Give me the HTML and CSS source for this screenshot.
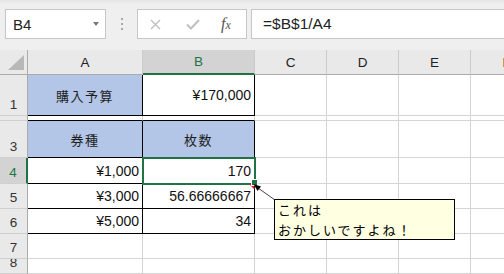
FILE: index.html
```html
<!DOCTYPE html>
<html lang="ja">
<head>
<meta charset="utf-8">
<title>Excel</title>
<link rel="stylesheet" href="styles.css">
</head>
<body>
<div class="app">
  <div class="toolbar">
    <div class="namebox"><span class="nb-text">B4</span><span class="nb-arrow"></span></div>
    <div class="grip"><i></i><i></i><i></i></div>
    <div class="fbtns">
      <svg class="ico-x" width="11" height="11" viewBox="0 0 11 11"><path d="M1 1L10 10M10 1L1 10" stroke="#bfbfbf" stroke-width="1.4" fill="none"/></svg>
      <svg class="ico-check" width="14" height="11" viewBox="0 0 14 11"><path d="M1 5.5L5 9.5L13 1" stroke="#bfbfbf" stroke-width="2" fill="none"/></svg>
      <span class="fx">f<small>x</small></span>
    </div>
    <div class="formula">=$B$1/A4</div>
  </div>
  <div class="sheet">
    <div class="h corner"><span class="tri"></span></div>
    <div class="h">A</div>
    <div class="h hsel">B</div>
    <div class="h">C</div>
    <div class="h">D</div>
    <div class="h">E</div>
    <div class="h">F</div>

    <div class="rh">1</div>
    <div class="c blue jp center bk">購入予算</div>
    <div class="c num bk">¥170,000</div>
    <div class="c"></div><div class="c"></div><div class="c"></div><div class="c"></div>

    <div class="rh"></div>
    <div class="c bkb"></div>
    <div class="c bkb"></div>
    <div class="c"></div><div class="c"></div><div class="c"></div><div class="c"></div>

    <div class="rh">3</div>
    <div class="c blue jp center bk">券種</div>
    <div class="c blue jp center bk">枚数</div>
    <div class="c"></div><div class="c"></div><div class="c"></div><div class="c"></div>

    <div class="rh rsel">4</div>
    <div class="c num bk">¥1,000</div>
    <div class="c num bk sel">170</div>
    <div class="c"></div><div class="c"></div><div class="c"></div><div class="c"></div>

    <div class="rh">5</div>
    <div class="c num bk">¥3,000</div>
    <div class="c num bk">56.66666667</div>
    <div class="c"></div><div class="c"></div><div class="c"></div><div class="c"></div>

    <div class="rh">6</div>
    <div class="c num bk">¥5,000</div>
    <div class="c num bk">34</div>
    <div class="c"></div><div class="c"></div><div class="c"></div><div class="c"></div>

    <div class="rh">7</div>
    <div class="c"></div><div class="c"></div><div class="c"></div><div class="c"></div><div class="c"></div><div class="c"></div>

    <div class="rh">8</div>
    <div class="c"></div><div class="c"></div><div class="c"></div><div class="c"></div><div class="c"></div><div class="c"></div>

    <svg class="callout" width="504" height="224" viewBox="0 50 504 224">
      <polygon points="249,184 254.5,184 254.5,189.5" fill="#e02020"/>
      <rect x="251.5" y="179.5" width="6" height="6" fill="#217346" stroke="#ffffff" stroke-width="1"/>
      <line x1="258" y1="188" x2="275" y2="200" stroke="#444444" stroke-width="1"/>
      <polygon points="253.5,184 261,186.5 257.5,191" fill="#000000"/>
    </svg>
    <div class="comment">これは<br>おかしいですよね！</div>
  </div>
</div>
</body>
</html>
```

FILE: styles.css
```css
* { box-sizing: border-box; }
html, body { margin: 0; padding: 0; }
body {
  width: 504px;
  height: 274px;
  overflow: hidden;
  background: #efefef;
  font-family: "Liberation Sans", Arial, sans-serif;
}
.app { width: 504px; height: 274px; display: flex; flex-direction: column; }

.toolbar {
  height: 50px;
  flex: none;
  display: flex;
  align-items: flex-start;
  padding: 9px 0 0 5px;
  background: linear-gradient(#e4e4e4 0px, #efefef 4px, #efefef 100%);
}
.namebox {
  width: 101px;
  height: 30px;
  background: #fff;
  border: 1px solid #c6c6c6;
  display: flex;
  align-items: center;
  justify-content: space-between;
  padding: 0 6px 0 7px;
}
.nb-text { font-size: 15px; color: #222; }
.nb-arrow {
  width: 0; height: 0;
  border-left: 3.5px solid transparent;
  border-right: 3.5px solid transparent;
  border-top: 4px solid #777;
}
.grip {
  width: 31px;
  height: 30px;
  display: flex;
  flex-direction: column;
  align-items: center;
  justify-content: center;
  gap: 3px;
}
.grip i { display: block; width: 2px; height: 2px; background: #a8a8a8; }
.fbtns {
  width: 110px;
  height: 30px;
  background: #fff;
  border: 1px solid #c6c6c6;
  display: flex;
  align-items: center;
  padding-left: 12px;
}
.ico-check { margin-left: 25px; }
.fx {
  margin-left: 21px;
  font-family: "Liberation Serif", "Times New Roman", serif;
  font-style: italic;
  font-size: 16px;
  color: #555;
  line-height: 1;
}
.fx small { font-size: 12px; }
.formula {
  flex: 1;
  margin-left: 4px;
  height: 30px;
  background: #fff;
  border: 1px solid #c6c6c6;
  border-right: none;
  display: flex;
  align-items: center;
  padding-left: 11px;
  font-size: 15.5px;
  color: #222;
}

.sheet {
  position: relative;
  flex: 1;
  overflow: hidden;
  display: grid;
  grid-template-columns: 28px 115px 112px 72px 72px 72px 72px;
  grid-template-rows: 25px 41px 5px 37px 26px 25px 25px 25px 1fr;
  background: #fff;
}
.h {
  background: #e9e9e9;
  border-right: 1px solid #cbcbcb;
  border-bottom: 1px solid #ababab;
  display: flex;
  align-items: center;
  justify-content: center;
  font-size: 13.5px;
  color: #222;
}
.corner { position: relative; border-right-color: #ababab; }
.tri {
  position: absolute;
  right: 3px;
  bottom: 4px;
  width: 0; height: 0;
  border-left: 16px solid transparent;
  border-bottom: 15px solid #b8b8b8;
}
.hsel {
  background: #d3d3d3;
  color: #217346;
  border-bottom: 2px solid #217346;
}
.rh {
  background: #e9e9e9;
  border-right: 1px solid #ababab;
  border-bottom: 1px solid #cfcfcf;
  display: flex;
  align-items: flex-end;
  justify-content: center;
  padding-bottom: 2px;
  font-size: 13.5px;
  line-height: 16px;
  color: #333;
  overflow: hidden;
}
.rsel {
  background: #d3d3d3;
  color: #217346;
  border-right: 2px solid #217346;
}
.c {
  border-right: 1px solid #d4d4d4;
  border-bottom: 1px solid #d4d4d4;
  display: flex;
  align-items: center;
  font-size: 14px;
  color: #111;
  white-space: nowrap;
  overflow: visible;
}
.blue { background: #b4c6e7; }
.bk { border-right-color: #000; border-bottom-color: #000; }
.bkb { border-bottom-color: #000; }
.center { justify-content: center; }
.num { justify-content: flex-end; padding-right: 3px; }
.jp {
  font-family: "Noto Sans CJK JP", "Liberation Sans", sans-serif;
  font-size: 13px;
  letter-spacing: 1.5px;
  color: #1e1e1e;
}
.sel { position: relative; }
.sel::after {
  content: "";
  position: absolute;
  left: -1px;
  top: -1px;
  right: -2px;
  bottom: -2px;
  border: 2px solid #217346;
}
.callout {
  position: absolute;
  left: 0;
  top: 0;
  pointer-events: none;
}
.comment {
  position: absolute;
  left: 274px;
  top: 149px;
  width: 181px;
  height: 41px;
  background: #ffffe1;
  border: 1px solid #000;
  padding: 0 0 0 3px;
  font-family: "Noto Sans CJK JP", sans-serif;
  font-size: 13px;
  letter-spacing: 2px;
  line-height: 19.5px;
  color: #000;
  white-space: nowrap;
}
```
